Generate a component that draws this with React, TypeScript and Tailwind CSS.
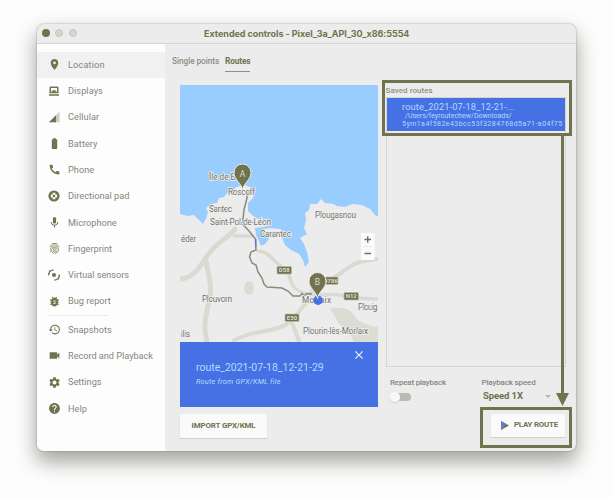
import React from 'react';
import {
  MdBatteryFull,
  MdBugReport,
  MdCall,
  MdClose,
  MdFingerprint,
  MdHelp,
  MdHistory,
  MdLocationOn,
  MdMic,
  MdSettings,
  MdVideocam,
} from 'react-icons/md';

const DisplaysIcon = () => (
  <svg viewBox="0 0 12 12" className="size-3" fill="currentColor">
    <path fillRule="evenodd" d="M2.500 1.500h7a1 1 0 0 1 1 1v5.700h-9V2.500a1 1 0 0 1 1-1zM3 3v3.700h1.300V5.200h3.400v1.500H9V3zM1 9.200h10v1.500H1z" />
  </svg>
);

const CellularIcon = () => (
  <svg viewBox="0 0 12 12" className="size-3" fill="currentColor">
    <path d="M11.500.8v10.400H1z" opacity=".35" />
    <path d="M8 4.300v6.900H1z" />
  </svg>
);

const DpadIcon = () => (
  <svg viewBox="0 0 12 12" className="size-3">
    <circle cx="6" cy="6" r="5.600" fill="currentColor" />
    <path d="M4.600 2.800h2.800v1.800h1.800v2.800H7.400v1.800H4.600V7.400H2.800V4.600h1.800z" fill="#f4f4ee" />
    <circle cx="6" cy="6" r="1.200" fill="currentColor" />
  </svg>
);

const SensorsIcon = () => (
  <svg viewBox="0 0 12 12" className="size-3" fill="none" stroke="currentColor" strokeWidth="1.200">
    <circle cx="6" cy="6" r="2" fill="currentColor" stroke="none" />
    <path d="M.8 5.500A5.200 5.200 0 0 1 5.800.9M1 6.500L.2 4M11.200 6.500a5.200 5.200 0 0 1-5 4.600M11 5.500l.8 2.500" />
    <path d="M2.300 2.300l-1.500-.3M9.700 9.700l1.500.3" />
  </svg>
);

const mainItems = [
  { label: 'Location', icon: <MdLocationOn />, track: 'tracking-[0.13px]' },
  { label: 'Displays', icon: <DisplaysIcon />, track: 'tracking-[0.05px]' },
  { label: 'Cellular', icon: <CellularIcon />, track: 'tracking-[0.05px]' },
  { label: 'Battery', icon: <MdBatteryFull />, track: 'tracking-[0.05px]' },
  { label: 'Phone', icon: <MdCall />, track: 'tracking-[0.05px]' },
  { label: 'Directional pad', icon: <DpadIcon />, track: 'tracking-[0px]' },
  { label: 'Microphone', icon: <MdMic />, track: 'tracking-[0px]' },
  { label: 'Fingerprint', icon: <MdFingerprint />, track: 'tracking-[0px]' },
  { label: 'Virtual sensors', icon: <SensorsIcon />, track: 'tracking-[-0.03px]' },
  { label: 'Bug report', icon: <MdBugReport />, track: 'tracking-[0px]' },
];

const extraItems = [
  { label: 'Snapshots', icon: <MdHistory />, track: 'tracking-[0.03px]' },
  { label: 'Record and Playback', icon: <MdVideocam />, track: 'tracking-[-0.03px]' },
  { label: 'Settings', icon: <MdSettings />, track: 'tracking-[0px]' },
  { label: 'Help', icon: <MdHelp />, track: 'tracking-[0px]' },
];

type Item = (typeof mainItems)[number];

function NavItem({ item, active }: { item: Item; active?: boolean }) {
  return (
    <li className={`flex h-[26.300px] items-center pl-[11px] ${active ? 'bg-[#f1f1f1]' : ''}`}>
      <span className="flex w-[20px] text-[13px] text-[#70734d]">{item.icon}</span>
      <span className={`whitespace-nowrap text-[9.200px] text-[#85877c] ${item.track}`}>{item.label}</span>
    </li>
  );
}

function Pin({ x, y, label }: { x: number; y: number; label: string }) {
  return (
    <g transform={`translate(${x} ${y})`}>
      <path
        d="M0 0C-1-7-8.500-10-8.500-17.500a8.500 8.500 0 0 1 17 0C8.500-10 1-7 0 0z"
        fill="#70734d"
        stroke="#ecece8"
        strokeWidth="1"
      />
      <text y="-13.500" textAnchor="middle" fontSize="8.500" fill="#dcdcd0">{label}</text>
    </g>
  );
}

function Place({ x, y, w, children }: { x: number; y: number; w: number; children: string }) {
  return (
    <text x={x} y={y} textLength={w} fontSize="8.300" fill="#70736a" stroke="#eeeeee" strokeWidth="1.500" paintOrder="stroke">
      {children}
    </text>
  );
}

function RoadBadge({ x, y, w, children }: { x: number; y: number; w: number; children: string }) {
  return (
    <g>
      <rect x={x} y={y} width={w} height="7.500" rx="1" fill="#70734d" stroke="#b9baa8" strokeWidth=".7" />
      <text x={x + w / 2} y={y + 5.900} textAnchor="middle" fontSize="6" fontWeight="700" fill="#dcdcd0">{children}</text>
    </g>
  );
}

function RouteMap() {
  return (
    <svg viewBox="180 85 198 257" className="block h-[257px] w-[198px]">
      <rect x="180" y="85" width="198" height="257" fill="#99ccff" />
      <path
        fill="#ececec"
        d="M180 214L188 216 194 215 199 220 203 224 206 219 208 212 206 208 211 204 217 203 219 198 224 197 227 193 233 191 236 187 245 185 252 188 255 192 253 198 248 203 248 211 252 215 258 219 268 219 271 224 264 227 255 228 256 235 259 241 261 246 265 244 269 239 265 234 263 229 270 228 280 229 285 232 282 238 285 245 291 250 299 254 303 260 305 267 309 262 307 252 304 244 300 238 307 234 304 228 306 220 305 213 309 210 310 204 317 204 321 199 325 203 333 204 337 206 345 207 352 204 362 205 370 209 376 216 378 216V342H180z"
      />
      <g fill="none" stroke="#dadad2" strokeLinecap="round" strokeLinejoin="round">
        <path strokeWidth="5" d="M180 279c10 0 18-9 23-17s9-13 15-18 13-9 17-15" />
        <path strokeWidth="5" d="M206 261c2 11 6 23 4 35s-6 22-5 35l2 11" />
        <path strokeWidth="3.500" d="M234 236h19M258 251c9 0 13 7 19 12s11 7 13 15 5 13 17 16 22-1 32 1 24 4 39 4" />
        <path strokeWidth="4" d="M309 295c8-11 17-13 26-18s15-13 25-15 12-2 18-3M309 301c-8 5-11 16-22 23s-28 7-40 11l-13 5M289 316l6 14 4 11" />
      </g>
      <g fill="#dcdcd5">
        <ellipse cx="249" cy="288" rx="5" ry="7" />
        <path d="M330 308q19-2 24 7t24 12v15h-24q-5-12-15-18z" />
      </g>
      <path
        d="M247 191L247 198 244 210 242.500 224 249 231 255.500 239 256 250 251 252 249.500 257 252 263 256 265 258 272 262 278 264 284 267 287 282 288 288 291 293 296 300 296 302 293.500 304 296 307 293.500 312 294"
        fill="none"
        stroke="#888b7c"
        strokeWidth="1.500"
      />
      <path d="M255.800 239v8" stroke="#4571e4" strokeWidth="1" />
      <Place x={209} y={180} w={38}>Île de Batz</Place>
      <Place x={228} y={195} w={27}>Roscoff</Place>
      <Place x={209} y={212} w={23}>Santec</Place>
      <Place x={210} y={225} w={61}>Saint-Pol-de-Léon</Place>
      <Place x={260} y={237} w={31}>Carantec</Place>
      <Place x={315} y={217.500} w={41}>Plougasnou</Place>
      <Place x={181} y={241.500} w={15}>éder</Place>
      <Place x={202} y={301.500} w={30}>Plouvorn</Place>
      <Place x={302} y={303} w={29}>Morlaix</Place>
      <Place x={358} y={310} w={19.500}>Plouig</Place>
      <Place x={303} y={334} w={65}>Plourin-lès-Morlaix</Place>
      <Place x={181} y={337} w={9}>ilis</Place>
      <RoadBadge x={277} y={266.500} w={14.500}>D58</RoadBadge>
      <RoadBadge x={323} y={277} w={15}>D786</RoadBadge>
      <RoadBadge x={344} y={292.500} w={14.500}>N12</RoadBadge>
      <RoadBadge x={285} y={314} w={14}>E50</RoadBadge>
      <circle cx="318" cy="300.300" r="4.700" fill="#4571e4" />
      <Pin x={242.500} y={190} label="A" />
      <Pin x={317.500} y={298.500} label="B" />
      <rect x="361" y="233" width="13.500" height="27" rx="1" fill="#fbfbfb" />
      <path d="M363 246.500h9.500" stroke="#dededb" strokeWidth=".7" />
      <path d="M364.500 239.500h6.500M367.750 236.200v6.600M364.500 253.500h6.500" stroke="#70734d" strokeWidth="1.400" />
    </svg>
  );
}

export default function App() {
  return (
    <div className="relative h-[500px] w-[613px] overflow-hidden bg-[#fdfdfd] pl-[37px] pt-6 font-[Roboto,sans-serif]">
      <div className="flex h-[426.500px] w-[539px] flex-col overflow-hidden rounded-[7px] bg-[#ececec] shadow-[0_10px_20px_1px_rgba(70,70,55,0.48),0_0_2px_rgba(80,80,70,0.5)]">
        <header className="flex h-[19.500px] shrink-0 items-center border-b border-[#d6d6d2] pl-[5px]">
          <div className="flex gap-[5.300px]">
            <span className="size-2 rounded-full bg-[#70734d]" />
            <span className="size-2 rounded-full border border-[#c5c6bf] bg-[#d5d6d0]" />
            <span className="size-2 rounded-full border border-[#c5c6bf] bg-[#d5d6d0]" />
          </div>
          <h1 className="ml-[127.500px] whitespace-nowrap font-[Inter,sans-serif] text-[9px] font-bold tracking-[-0.040px] text-[#70734d]">
            Extended controls - Pixel_3a_API_30_x86:5554
          </h1>
        </header>

        <div className="flex min-h-0 flex-1">
          <nav className="w-[127.500px] shrink-0 bg-[#fdfdfd] pt-[8px]">
            <ul>
              {mainItems.map((item, i) => (
                <NavItem key={item.label} item={item} active={i === 0} />
              ))}
            </ul>
            <div className="ml-3 mt-px w-[58px] border-t border-dotted border-[#dcdcd6]" />
            <ul>
              {extraItems.map((item) => (
                <NavItem key={item.label} item={item} />
              ))}
            </ul>
          </nav>

          <main className="min-w-0 flex-1 pl-[7.500px] pt-[10.500px]">
            <div className="flex h-[30.500px] items-start gap-[5.500px] text-[8.300px] font-medium">
              <span className="w-[47.500px] whitespace-nowrap leading-[14px] tracking-[-0.080px] text-[#8c8e84]">Single points</span>
              <span className="h-[17.500px] border-b-[1.500px] border-[#8f9185] font-bold leading-[14px] tracking-[-0.120px] text-[#70734d]">Routes</span>
            </div>

            <div className="flex pl-[8px]">
              <section className="w-[198px]">
                <RouteMap />
                <div className="flex h-[65.500px] justify-between bg-[#4571e4] pl-4 pr-3 text-[#b5d9ff]">
                  <div className="pt-[18.500px]">
                    <p className="whitespace-nowrap text-[10.500px] leading-[15px] tracking-[-0.010px]">route_2021-07-18_12-21-29</p>
                    <p className="whitespace-nowrap text-[7.300px] italic leading-[14px] tracking-[0.23px]">Route from GPX/KML file</p>
                  </div>
                  <MdClose className="mt-[6px] size-[14px] text-[#e8f2ff]" />
                </div>
                <button className="mt-[7px] flex h-[24px] w-[87px] items-center justify-center whitespace-nowrap bg-[#fafafa] text-[7.900px] font-bold tracking-[-0.120px] text-[#70734d] shadow-[0_1px_1px_#d2d2cb]">
                  IMPORT GPX/KML
                </button>
              </section>

              <section className="ml-[7.500px] w-[180px]">
                <h2 className="h-[12px] whitespace-nowrap text-[8px] font-medium leading-[11px] tracking-[0.060px] text-[#8c8e84]">Saved routes</h2>
                <div className="h-[270.500px] border border-[#d6d6d1]">
                  <div className="h-[33px] overflow-hidden whitespace-nowrap bg-[#4571e4] pl-[15.500px] pt-[3px] text-[#b5d9ff]">
                    <p className="text-[9.200px] leading-[11.500px] tracking-[0.15px]">route_2021-07-18_12-21-...</p>
                    <p className="pl-[3px] text-[7px] leading-[8px] tracking-[0.02px]">/Users/feyroutechew/Downloads/</p>
                    <p className="text-[7px] leading-[8px] tracking-[0.45px]">5ym1a4f582e43bcc53f3284768d5a71-a04f75</p>
                  </div>
                </div>
                <div className="flex pl-[4.500px] pt-[10px] text-[8px] font-medium text-[#85877c]">
                  <div className="w-[91.500px]">
                    <p className="whitespace-nowrap leading-[12px] tracking-[-0.200px]">Repeat playback</p>
                    <div className="mt-[3px] flex items-center">
                      <span className="z-10 size-2.5 rounded-full bg-[#f8f8f8] shadow-[0_1px_1px_#d2d2cb]" />
                      <span className="-ml-[2px] h-[8px] w-[13px] rounded-r-full bg-[#b9bab4]" />
                    </div>
                  </div>
                  <div className="w-[78px]">
                    <p className="whitespace-nowrap leading-[12px] tracking-[-0.150px]">Playback speed</p>
                    <div className="flex items-center justify-between pl-[1.500px] pr-[9px] text-[9.500px] font-bold leading-[14px] text-[#70734d]">
                      <span className="whitespace-nowrap tracking-[-0.1px]">Speed 1X</span>
                      <span className="border-x-[3px] border-t-[3px] border-x-transparent border-t-[#b3b4ac]" />
                    </div>
                  </div>
                </div>
                <button className="ml-[105px] mt-[10.500px] flex h-[23.500px] w-[74px] items-center whitespace-nowrap bg-[#fafafa] pl-[10px] text-[7.900px] font-bold tracking-[-0.220px] text-[#70734d] shadow-[0_1px_1px_#d2d2cb]">
                  <svg viewBox="0 0 8 9" className="mr-[5.500px] h-[9px] w-2">
                    <path d="M0 0l8 4.500L0 9z" fill="#70734d" />
                    <path d="M0 0l5 3L2 7 0 9z" fill="#5b83c9" />
                  </svg>
                  PLAY ROUTE
                </button>
              </section>
            </div>
          </main>
        </div>
      </div>

      <div className="absolute left-[381.500px] top-[80px] h-[56px] w-[190.500px] border-[3px] border-[#70734d]" />
      <div className="absolute left-[480px] top-[407px] h-[41px] w-[92px] border-[3px] border-[#70734d]" />
      <svg viewBox="0 0 14 271" className="absolute left-[556px] top-[135px] h-[271px] w-[14px]">
        <path d="M6.500 0v260" stroke="#70734d" strokeWidth="3" />
        <path d="M0 258h13l-6.500 13z" fill="#70734d" />
      </svg>
    </div>
  );
}
